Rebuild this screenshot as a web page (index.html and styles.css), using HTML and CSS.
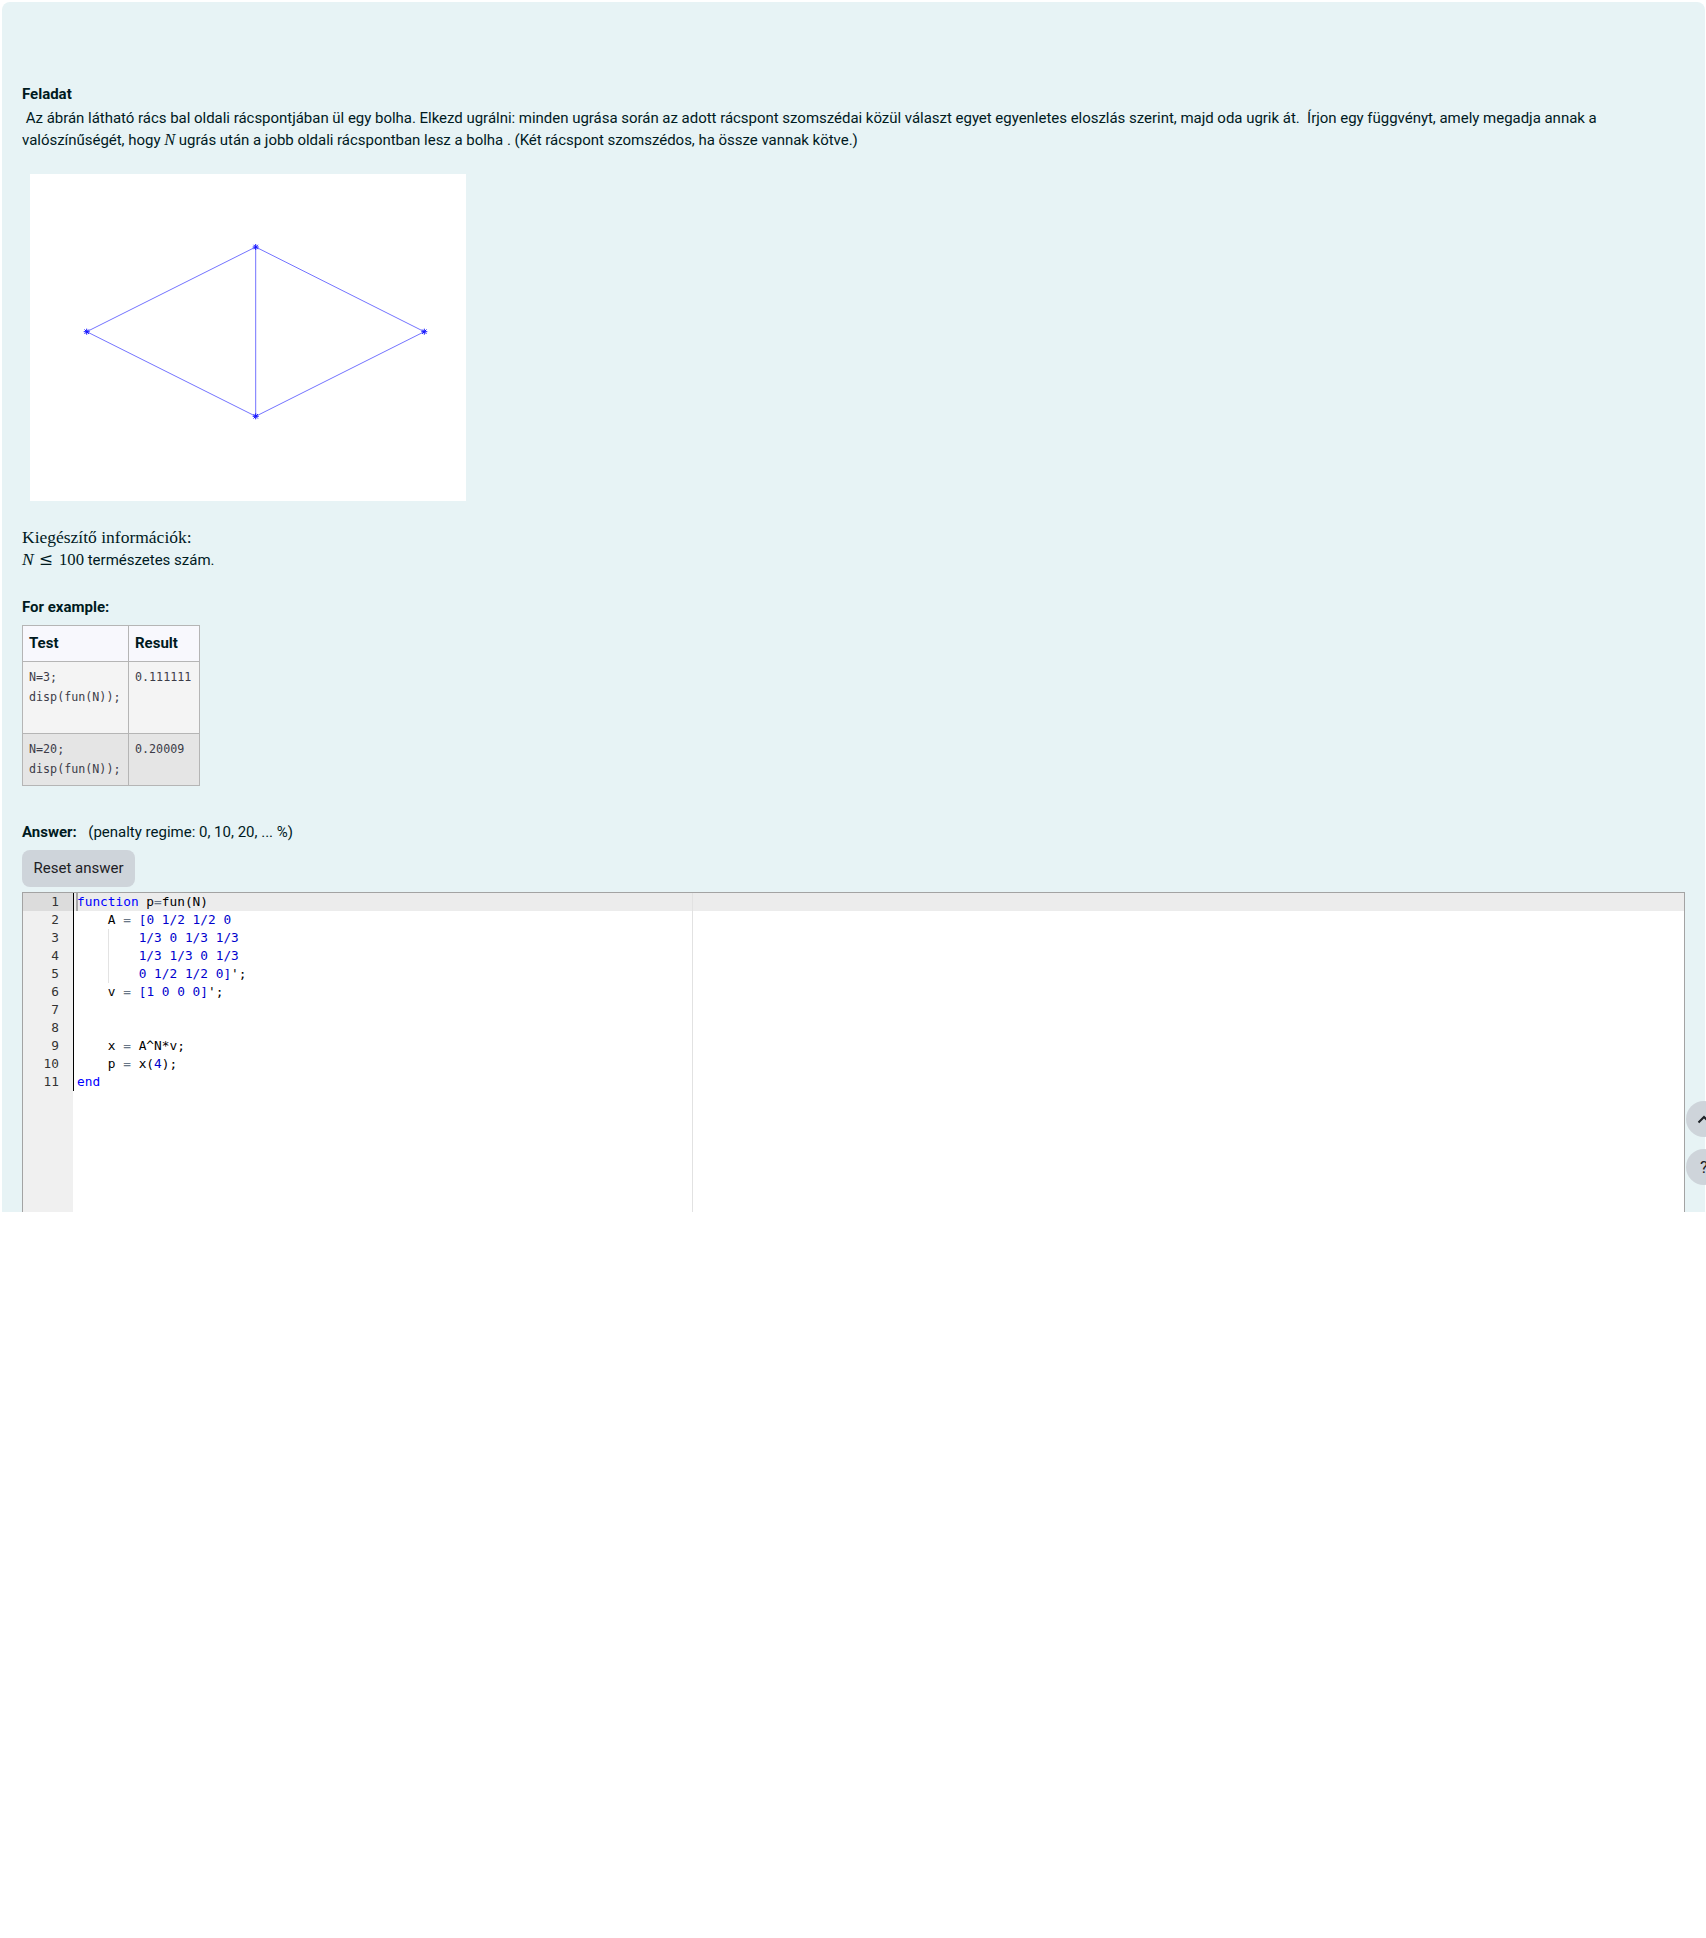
FILE: index.html
```html
<!DOCTYPE html>
<html lang="hu">
<head>
<meta charset="utf-8">
<title>Feladat</title>
<link rel="stylesheet" href="styles.css">
</head>
<body>
<div class="clip">
  <div class="que">
    <div class="qtext">
      <p class="title">Feladat</p>
      <p class="desc">&nbsp;Az ábrán látható rács bal oldali rácspontjában ül egy bolha. Elkezd ugrálni: minden ugrása során az adott rácspont szomszédai közül választ egyet egyenletes eloszlás szerint, majd oda ugrik át.&nbsp; Írjon egy függvényt, amely megadja annak a valószínűségét, hogy <span class="mi">N</span> ugrás után a jobb oldali rácspontban lesz a bolha . (Két rácspont szomszédos, ha össze vannak kötve.)</p>
      <div class="figure">
        <svg width="436" height="327" viewBox="0 0 436 327">
          <defs>
            <g id="star" stroke="#1515ff" stroke-width="1">
              <path d="M-3 0H3M0 -3V3M-2.2 -2.2L2.2 2.2M-2.2 2.2L2.2 -2.2"/>
            </g>
          </defs>
          <rect width="436" height="327" fill="#ffffff"/>
          <path d="M56.7 157.7L225.7 73L394.3 157.7L225.7 242.3ZM225.7 73V242.3" fill="none" stroke="#7373ff" stroke-width="1"/>
          <use href="#star" x="56.7" y="157.7"/>
          <use href="#star" x="225.7" y="73"/>
          <use href="#star" x="394.3" y="157.7"/>
          <use href="#star" x="225.7" y="242.3"/>
        </svg>
      </div>
      <p class="extra"><span class="serif">Kiegészítő információk:</span><br><span class="math"><span class="mi big">N</span><span class="mo">≤</span><span class="mn">100</span></span> természetes szám.</p>
    </div>

    <h4 class="forex">For example:</h4>
    <table class="examples">
      <colgroup><col class="c1"><col class="c2"></colgroup>
      <thead>
        <tr><th>Test</th><th>Result</th></tr>
      </thead>
      <tbody>
        <tr class="r1"><td><pre class="tall">N=3;
disp(fun(N));</pre></td><td><pre>0.111111</pre></td></tr>
        <tr class="r2"><td><pre>N=20;
disp(fun(N));</pre></td><td><pre>0.20009</pre></td></tr>
      </tbody>
    </table>

    <div class="answer"><b>Answer:</b>&nbsp; <span>(penalty regime: 0, 10, 20, ... %)</span></div>
    <button class="reset" type="button">Reset answer</button>

    <div class="editor">
      <div class="gutter">
        <div class="gl active">1</div>
        <div class="gl">2</div>
        <div class="gl">3</div>
        <div class="gl">4</div>
        <div class="gl">5</div>
        <div class="gl">6</div>
        <div class="gl">7</div>
        <div class="gl">8</div>
        <div class="gl">9</div>
        <div class="gl">10</div>
        <div class="gl">11</div>
      </div>
      <div class="code">
        <div class="lines">
          <div class="ln active"><span class="cursor"></span><span class="kw">function</span> p<span class="op">=</span>fun(N)</div>
          <div class="ln">    A <span class="op">=</span> <span class="num">[0 1/2 1/2 0</span></div>
          <div class="ln"><span class="ig">    </span><span class="ig guide">    </span><span class="num">1/3 0 1/3 1/3</span></div>
          <div class="ln"><span class="ig">    </span><span class="ig guide">    </span><span class="num">1/3 1/3 0 1/3</span></div>
          <div class="ln"><span class="ig">    </span><span class="ig guide">    </span><span class="num">0 1/2 1/2 0]</span>';</div>
          <div class="ln">    v <span class="op">=</span> <span class="num">[1 0 0 0]</span>';</div>
          <div class="ln"> </div>
          <div class="ln"> </div>
          <div class="ln">    x <span class="op">=</span> A^N*v;</div>
          <div class="ln">    p <span class="op">=</span> x(<span class="num">4</span>);</div>
          <div class="ln"><span class="kw">end</span></div>
        </div>
      </div>
      <div class="print-margin"></div>
    </div>
  </div>
</div>

<div class="fab fab-top">
  <svg width="14" height="9" viewBox="0 0 14 9"><polyline points="1.5,7.5 7,2 12.5,7.5" fill="none" stroke="#1d2125" stroke-width="2"/></svg>
</div>
<div class="fab fab-help">?</div>
</body>
</html>
```

FILE: styles.css
```css
* { box-sizing: border-box; }

html, body {
  margin: 0;
  padding: 0;
  background: #ffffff;
}

body {
  font-family: Roboto, "Noto Sans", "Liberation Sans", sans-serif;
  font-size: 15px;
  line-height: 22.5px;
  color: #001a1e;
}

.clip {
  height: 1212px;
  overflow: hidden;
  padding: 2px 1px 0 2px;
}

.que {
  background: #e7f3f5;
  border-radius: 8px 8px 0 0;
  padding: 81px 20px 0 20px;
  min-height: 1400px;
}

.title {
  margin: 0;
  font-weight: 700;
}

.desc {
  margin: 1px 0 0 0;
  letter-spacing: -0.025px;
}

.mi {
  font-family: "Liberation Serif", "DejaVu Serif", serif;
  font-style: italic;
  font-size: 16.5px;
  line-height: 1;
}

.figure {
  margin: 22.5px 0 0 8px;
  width: 436px;
  height: 327px;
}

.figure svg {
  display: block;
}

.extra {
  margin: 25.7px 0 0 0;
}

.serif {
  font-family: "Liberation Serif", "DejaVu Serif", serif;
  font-size: 17.5px;
  line-height: 1;
}

.math {
  font-family: "Liberation Serif", "DejaVu Serif", serif;
  font-size: 16.7px;
  line-height: 1;
}

.math .mi.big {
  font-size: 17.5px;
}

.math .mo {
  font-family: "DejaVu Serif", "Liberation Serif", serif;
  font-size: 17px;
  margin: 0 6px 0 5px;
}

.forex {
  margin: 24px 0 0 0;
  font-size: 15px;
  line-height: 22.5px;
  font-weight: 700;
}

.examples {
  margin-top: 7px;
  border-collapse: collapse;
  table-layout: fixed;
  width: 177px;
}

.examples col.c1 { width: 106px; }
.examples col.c2 { width: 71px; }

.examples th,
.examples td {
  border: 1px solid #b5b5b5;
  text-align: left;
  vertical-align: top;
}

.examples th {
  padding: 6px 6px;
  background: #f8f8fd;
  font-weight: 700;
  color: #001a1e;
}

.examples td {
  padding: 5px 6px 6px 6px;
}

.examples tr.r1 td { background: #f4f4f4; }
.examples tr.r2 td { background: #e5e5e5; }

.examples pre {
  margin: 0;
  font-family: "DejaVu Sans Mono", "Liberation Mono", monospace;
  font-size: 11.7px;
  line-height: 20px;
  color: #3c3c48;
  white-space: pre;
}

.examples pre.tall {
  min-height: 60px;
}

.answer {
  margin-top: 35.3px;
}

.answer b {
  font-weight: 700;
  margin-right: 4px;
}

.reset {
  display: block;
  margin-top: 7px;
  height: 36.5px;
  padding: 7px 11.5px;
  border: 0;
  border-radius: 8px;
  background: #ced4da;
  color: #1d2125;
  font-family: inherit;
  font-size: 15px;
  line-height: 22.5px;
}

.editor {
  position: relative;
  display: flex;
  margin-top: 5.5px;
  height: 420px;
  border: 1px solid #a3a3a3;
  background: #ffffff;
  font-family: "DejaVu Sans Mono", "Liberation Mono", monospace;
  font-size: 12.8px;
  line-height: 18px;
}

.gutter {
  width: 50px;
  flex: none;
  background: #f0f0f0;
  color: #333333;
}

.gl {
  height: 18px;
  text-align: right;
  padding-right: 14px;
}

.gl.active {
  background: #dcdcdc;
}

.code {
  flex: 1;
  min-width: 0;
}

.lines {
  border-left: 1px solid #000000;
}

.ln {
  position: relative;
  height: 18px;
  padding-left: 3px;
  white-space: pre;
  color: #000000;
}

.ln.active {
  background: #ececec;
}

.cursor {
  position: absolute;
  left: 2px;
  top: 0;
  width: 2px;
  height: 18px;
  background: #a8a8a8;
}

.ig {
  display: inline-block;
  height: 18px;
  vertical-align: top;
}

.ig.guide {
  box-shadow: inset 1px 0 0 #e3e3e3;
}

.kw { color: #0000ff; }
.num { color: #0000cd; }
.op { color: #687687; }

.print-margin {
  position: absolute;
  top: 0;
  bottom: 0;
  left: 669px;
  width: 1px;
  background: #e2e2e2;
}

.fab {
  position: fixed;
  right: -16px;
  width: 36px;
  height: 36px;
  border-radius: 50%;
  background: #ced4da;
  display: flex;
  align-items: center;
  justify-content: center;
  color: #1d2125;
  font-family: Roboto, "Liberation Sans", sans-serif;
  font-size: 17px;
}

.fab-top { top: 1101px; }
.fab-help { top: 1149px; }
```
